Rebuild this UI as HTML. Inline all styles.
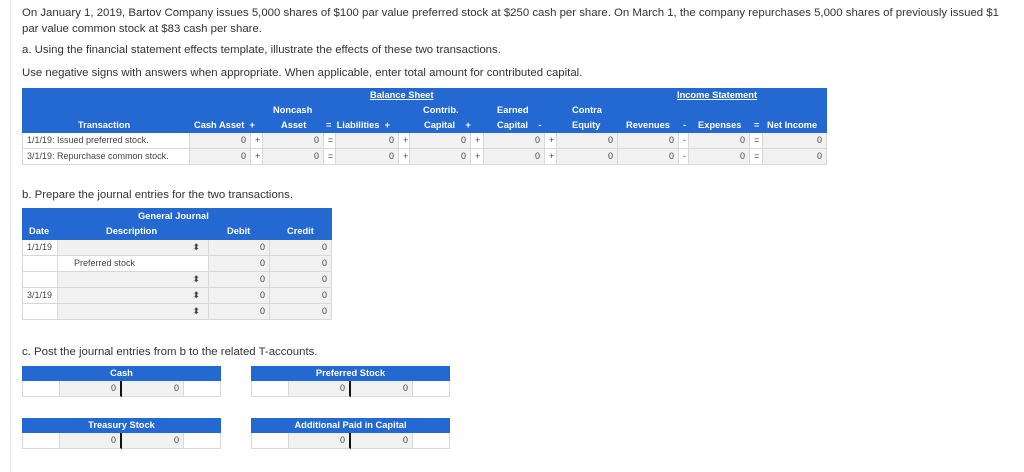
<!DOCTYPE html>
<html><head><meta charset="utf-8"><style>
*{margin:0;padding:0;box-sizing:border-box}
body{width:1024px;height:472px;background:#fff;font-family:"Liberation Sans",sans-serif;color:#333;position:relative;overflow:hidden}
.a{position:absolute;white-space:nowrap}
.t{font-size:11.4px;color:#333}
.h{position:absolute;background:#2469d1}
.w{position:absolute;color:#fff;font-weight:bold;font-size:9.3px;white-space:nowrap}
.c{position:absolute;font-size:9px;color:#444;border-right:1px solid #d8d8d8;border-bottom:1px solid #d8d8d8;height:16px;line-height:15px;padding:0 4px;white-space:nowrap}
.g{background:#f1f1f1}
.r{text-align:right}
.m{text-align:center}
</style></head><body>
<div class="a" style="left:10px;top:0;width:1px;height:472px;background:#e6e8ec"></div>
<div class="a t" style="left:22px;top:7px">On January 1, 2019, Bartov Company issues 5,000 shares of $100 par value preferred stock at $250 cash per share. On March 1, the company repurchases 5,000 shares of previously issued $1</div>
<div class="a t" style="left:22px;top:23px">par value common stock at $83 cash per share.</div>
<div class="a t" style="left:22px;top:44px">a. Using the financial statement effects template, illustrate the effects of these two transactions.</div>
<div class="a t" style="left:22px;top:67px">Use negative signs with answers when appropriate. When applicable, enter total amount for contributed capital.</div>

<div class="h" style="left:22px;top:88px;width:805px;height:45px"></div>
<div class="w" style="left:370px;top:90px;text-decoration:underline">Balance Sheet</div>
<div class="w" style="left:677px;top:90px;text-decoration:underline">Income Statement</div>
<div class="w" style="left:78px;top:120px">Transaction</div>
<div class="w" style="left:194px;top:120px">Cash Asset&nbsp; +</div>
<div class="w" style="left:273px;top:105px">Noncash</div>
<div class="w" style="left:281px;top:120px">Asset</div>
<div class="w" style="left:326px;top:120px">=&nbsp; Liabilities&nbsp; +</div>
<div class="w" style="left:423px;top:105px">Contrib.</div>
<div class="w" style="left:424px;top:120px">Capital&nbsp;&nbsp;&nbsp; +</div>
<div class="w" style="left:497px;top:105px">Earned</div>
<div class="w" style="left:497px;top:120px">Capital&nbsp;&nbsp;&nbsp; -</div>
<div class="w" style="left:572px;top:105px">Contra</div>
<div class="w" style="left:572px;top:120px">Equity</div>
<div class="w" style="left:626px;top:120px">Revenues</div>
<div class="w" style="left:683px;top:120px">-</div>
<div class="w" style="left:698px;top:120px">Expenses</div>
<div class="w" style="left:754px;top:120px">=</div>
<div class="w" style="left:767px;top:120px">Net Income</div>

<div id="rows"></div>

<div class="a t" style="left:22px;top:189px">b. Prepare the journal entries for the two transactions.</div>
<div class="h" style="left:22px;top:208px;width:310px;height:32px"></div>
<div class="w" style="left:138px;top:211px">General Journal</div>
<div class="w" style="left:29px;top:226px">Date</div>
<div class="w" style="left:106px;top:226px">Description</div>
<div class="w" style="left:227px;top:226px">Debit</div>
<div class="w" style="left:287px;top:226px">Credit</div>
<div id="jr"></div>

<div class="a t" style="left:22px;top:346px">c. Post the journal entries from b to the related T-accounts.</div>
<div id="tacc"></div>

<script>
var rows=document.getElementById('rows'),h='';
var cols=[[22,168,'w'],[190,61,'g'],[251,12,'s'],[263,61,'g'],[324,12,'s'],[336,63,'g'],[399,11,'s'],[410,61,'g'],[471,13,'s'],[484,61,'g'],[545,12,'s'],[557,61,'g'],[618,61,'g'],[679,10,'s'],[689,61,'g'],[750,13,'s'],[763,64,'g']];
var sg=['+','=','+','+','+','-','='];
var tx=['1/1/19: Issued preferred stock.','3/1/19: Repurchase common stock.'];
for(var r=0;r<2;r++){var y=133+r*16,si=0;
cols.forEach(function(c,i){var txt,cl='c';
if(i==0){txt=tx[r];cl+=' ';}else if(c[2]=='s'){txt=sg[si++];cl+=' m';}else{txt='0';cl+=' g r';}
h+='<div class="'+cl+'" style="left:'+c[0]+'px;top:'+y+'px;width:'+c[1]+'px;'+(i==0?'border-left:1px solid #d8d8d8;':'')+'">'+txt+'</div>';});}
rows.outerHTML=h;
h='';var d=['1/1/19','','','3/1/19',''];
for(var r=0;r<5;r++){var y=240+r*16;
h+='<div class="c" style="left:22px;top:'+y+'px;width:36px;border-left:1px solid #d8d8d8">'+d[r]+'</div>';
h+=(r==1)?'<div class="c" style="left:58px;top:'+y+'px;width:151px;padding-left:16px">Preferred stock</div>':'<div class="c g r" style="left:58px;top:'+y+'px;width:151px;padding-right:8px">&#x2B0D;</div>';
h+='<div class="c g r" style="left:209px;top:'+y+'px;width:61px">0</div><div class="c g r" style="left:270px;top:'+y+'px;width:62px">0</div>';}
document.getElementById('jr').outerHTML=h;
h='';[[22,366,'Cash'],[251,366,'Preferred Stock'],[22,418,'Treasury Stock'],[251,418,'Additional Paid in Capital']].forEach(function(t){var x=t[0],y=t[1];
h+='<div class="h" style="left:'+x+'px;top:'+y+'px;width:199px;height:15px"></div><div class="w" style="left:'+x+'px;top:'+(y+2)+'px;width:199px;text-align:center">'+t[2]+'</div>';
h+='<div class="c" style="left:'+x+'px;top:'+(y+15)+'px;width:38px;border-left:1px solid #d8d8d8"></div>';
h+='<div class="c g r" style="left:'+(x+38)+'px;top:'+(y+15)+'px;width:62px;border-right:2px solid #111">0</div>';
h+='<div class="c g r" style="left:'+(x+100)+'px;top:'+(y+15)+'px;width:62px">0</div>';
h+='<div class="c" style="left:'+(x+162)+'px;top:'+(y+15)+'px;width:37px"></div>';});
document.getElementById('tacc').outerHTML=h;
</script>
</body></html>
